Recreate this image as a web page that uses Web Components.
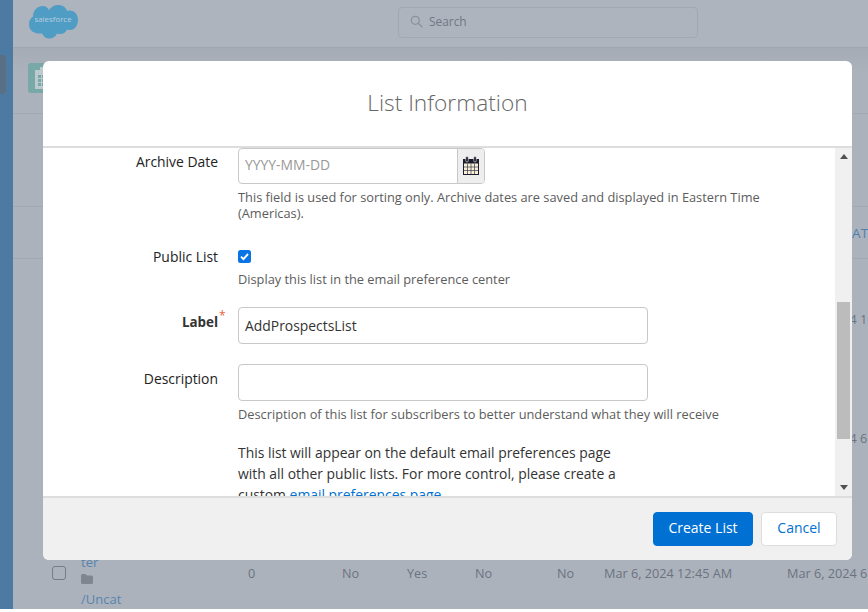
<!DOCTYPE html>
<html><head><meta charset="utf-8"><title>List Information</title>
<style>
html,body{margin:0;padding:0;background:#fff;height:612px;overflow:hidden}
body{font-family:"Open Sans","Noto Sans",sans-serif;font-size:13px;color:#333}
</style></head>
<body>
<sf-app>
  <sf-sidebar slot="side"></sf-sidebar>
  <sf-topbar slot="main"></sf-topbar>
  <sf-pagehead slot="main"></sf-pagehead>
  <sf-table slot="main">
    <sf-row kind="head" last="CREATED AT"></sf-row>
    <sf-row kind="plain" last="Mar 6, 2024 1:15 AM"></sf-row>
    <sf-row kind="plain" last="Mar 6, 2024 6:45 AM"></sf-row>
    <sf-row kind="full" last="Mar 6, 2024 6:45 AM"></sf-row>
  </sf-table>
</sf-app>
<sf-modal heading="List Information">
  <sf-field label="Archive Date" help="This field is used for sorting only. Archive dates are saved and displayed in Eastern Time (Americas)." style="height:102px"><sf-date></sf-date></sf-field>
  <sf-field label="Public List" help="Display this list in the email preference center" check style="height:57px"><input-check></input-check></sf-field>
  <sf-field label="Label" required style="height:57px"><sf-input value="AddProspectsList"></sf-input></sf-field>
  <sf-field label="Description" help="Description of this list for subscribers to better understand what they will receive" style="height:88px"><sf-input></sf-input></sf-field>
  <sf-note>This list will appear on the default email preferences page with all other public lists. For more control, please create a custom <a>email preferences page</a>.</sf-note>
  <sf-button slot="foot" kind="brand">Create List</sf-button>
  <sf-button slot="foot">Cancel</sf-button>
</sf-modal>
<script>
function def(name,css,html){
  customElements.define(name,class extends HTMLElement{
    connectedCallback(){
      if(this.shadowRoot)return;
      const r=this.attachShadow({mode:'open'});
      r.innerHTML='<style>'+css+'</style>'+(typeof html==='function'?html(this):html);
    }
  });
}
def('sf-app',`:host{display:flex;height:609px;background:#abb2bc;overflow:hidden}
.m{flex:1;min-width:0;display:flex;flex-direction:column}`,
`<slot name="side"></slot><div class="m"><slot name="main"></slot></div>`);
def('sf-sidebar',`:host{display:block;width:13px;flex:none;background:#4d7aa3;padding-top:55px;box-sizing:border-box}
div{width:6px;height:39px;background:#586f85;border-radius:0 4px 4px 0}`,`<div></div>`);
def('sf-topbar',`:host{display:flex;flex:none;align-items:center;height:48px;box-sizing:border-box;border-bottom:1px solid #9fa6b0;background:#adb4be;padding:0 0 0 15px}
.logo{width:50px;height:36px;position:relative;flex:none;margin-top:-5px}
svg.c{display:block;width:50px;height:36px}
.t{position:absolute;left:3px;top:11px;width:44px;text-align:center;font:400 7.9px "Open Sans",sans-serif;color:#b9d0de}
.s{margin-left:320px;width:300px;height:31px;box-sizing:border-box;border:1px solid #a0a8b2;border-radius:4px;display:flex;align-items:center;padding:0 0 2px 11px;gap:6px;color:#6f7884;font-size:11.9px;margin-top:-3px}
.s svg{width:13px;height:13px;flex:none}`,
`<div class="logo"><svg class="c" viewBox="0 0 50 36"><path fill="#4f9cc5" d="M21 7c2-3 5-5 9-5 4 0 8 2 9 6 1-.5 3-1 4-.2C47 8 50 12 50 17c0 5-3 10-8 10-1 0-2 0-3-.5-1 3-4 4.500-7 4.500-1 0-2 0-3-.5-1.500 3.500-4.500 5-7.500 5-3.500 0-6-2-7.500-5H12C6 30.500 1 28 1 21c0-3 1.500-6 4-7.500C5 7 10 3 15 3c2.500 0 4.500 1.500 6 4z"/></svg><span class="t">salesforce</span></div>
<div class="s"><svg viewBox="0 0 13 13" fill="none" stroke="#8a929d" stroke-width="1.300"><circle cx="5.300" cy="5.300" r="4"/><path d="M8.300 8.300l4 4"/></svg><span>Search</span></div>`);
def('sf-pagehead',`:host{display:block;flex:none;height:66px;box-sizing:border-box;border-bottom:1px solid #a2a9b3;background:linear-gradient(#a5acb6,#abb2bc 40%);padding:15px 0 0 15px}
div{width:30px;height:30px;background:#78a8a7;border-radius:3px;display:flex;justify-content:center;align-items:center}
svg{width:18px;height:22px}`,
`<div><svg viewBox="0 0 18 22"><path fill="#bccacd" d="M6 0h6v3H6zM1 3h16v19H1z"/><path fill="#78a8a7" d="M4 8h3v3H4zM8 8h3v3H8zM12 8h3v3h-3zM4 12h3v3H4zM8 12h3v3H8zM12 12h3v3h-3zM4 16h3v3H4zM8 16h3v3H8zM12 16h3v3h-3z"/></svg></div>`);
def('sf-table',`:host{display:block;flex:none;padding-top:92px}`,`<slot></slot>`);
def('sf-row',`:host{display:grid;grid-template-columns:39px 29px 167px 94px 65px 68px 82px 47px 183px 100px;align-items:center;color:#6b7380;font-size:12.7px;white-space:nowrap}
:host([kind=head]){height:53px;box-sizing:border-box;border-top:1px solid #a2a9b3;border-bottom:1px solid #a2a9b3;color:#4f7fae;font-size:13.5px}
:host([kind=plain]){height:119px}
:host([kind=full]){height:152px}
.l{grid-column:10}
:host([kind=head]) .l{padding-left:4px}
.box{width:14px;height:14px;box-sizing:border-box;border:1px solid #757c87;border-radius:3px;grid-column:2}
.n{grid-column:3;display:flex;flex-direction:column;color:#5a84ad;margin-top:14px;font-size:13px}
.n span{height:20px;line-height:20px}.n svg{display:block;width:12px;height:10px;margin:2px 0 5px}`,
el=>{const k=el.getAttribute('kind'),l=el.getAttribute('last');
 if(k==='full')return `<div class="box"></div><div class="n"><span>ter</span><svg viewBox="0 0 12 10"><path fill="#80868f" d="M0 1.500Q0 0 1.500 0h3l1.500 1.500h4.500Q12 1.500 12 3v5.500Q12 10 10.500 10h-9Q0 10 0 8.500z"/></svg><span>/Uncat</span></div><div>0</div><div>No</div><div>Yes</div><div>No</div><div>No</div><div>Mar 6, 2024 12:45 AM</div><div>${l}</div>`;
 return `<div class="l">${l}</div>`;});
def('sf-modal',`:host{position:absolute;left:43px;top:61px;width:809px;height:499px;display:flex;flex-direction:column;background:#fff;border-radius:6px;overflow:hidden}
header{flex:none;border-bottom:2px solid #ddd;display:flex;align-items:center;justify-content:center;font:300 22.7px "Open Sans",sans-serif;color:#666;padding-bottom:2px;height:83px}
.b{flex:1;display:flex;min-height:0}
.c{flex:1;min-width:0;overflow:hidden}
footer{height:64px;box-sizing:border-box;flex:none;border-top:2px solid #ddd;background:#f0f0f0;display:flex;justify-content:flex-end;align-items:center;gap:8px;padding:0 15px 0 0}`,
el=>`<header>${el.getAttribute('heading')}</header><div class="b"><div class="c"><slot></slot></div><sf-scroll></sf-scroll></div><footer><slot name="foot"></slot></footer>`);
def('sf-scroll',`:host{display:flex;flex-direction:column;align-items:center;width:17px;flex:none;background:#f0f0f0;box-sizing:border-box;padding-top:6px}
i{display:block;width:0;height:0;border-left:4px solid transparent;border-right:4px solid transparent}
.u{border-bottom:5px solid #505050}.d{border-top:5px solid #505050;margin-top:46px}
.t{width:13px;height:137px;background:#bcbcbc;margin-top:143px}`,
`<i class="u"></i><div class="t"></div><i class="d"></i>`);
def('sf-field',`:host{display:grid;grid-template-columns:175px 1fr;column-gap:20px;align-content:start;box-sizing:border-box;color:#333}
.l{text-align:right;font-size:13.9px;line-height:18px;padding-top:5px;position:relative;color:#222}
:host([required]) .l{font-weight:700;font-size:13.4px;color:#333;padding-top:6px}
:host([label=Description]) .l{padding-top:6px}
:host([check]) .l{padding-top:0;margin-top:-2px}
.r{position:absolute;left:176px;top:0;color:#e8643c;font-weight:400;font-size:12px}
.h{grid-column:2;color:#5c5c5c;font-size:12.8px;line-height:16px;margin-top:5px;width:530px}
:host([check]) .h{margin-top:2px}`,
el=>`<div class="l">${el.getAttribute('label')}${el.hasAttribute('required')?'<span class="r">*</span>':''}</div><div><slot></slot></div>${el.getAttribute('help')?`<div class="h">${el.getAttribute('help')}</div>`:''}`);
def('sf-input',`:host{display:block;width:410px;height:37px;box-sizing:border-box;border:1px solid #c8c8c8;border-radius:4px;background:#fff;padding:0 6px;line-height:35px;font-size:13.9px;color:#333}`,
el=>el.getAttribute('value')||'');
def('sf-date',`:host{display:flex;width:247px;height:36px;box-sizing:border-box;border:1px solid #c8c8c8;border-radius:4px;overflow:hidden}
.p{flex:1;padding-left:6px;line-height:32px;color:#999;font-size:13.9px}
.a{width:26px;flex:none;background:#eee;border-left:1px solid #c8c8c8;display:flex;align-items:center;justify-content:center}
svg{width:18px;height:20px;margin-top:-1px}`,
`<div class="p">YYYY-MM-DD</div><div class="a"><svg viewBox="0 0 18 20"><path fill="#1c1c2c" d="M1 3h16v16H1z"/><path fill="#f8efd8" d="M2 7.500h14V18H2z"/><path stroke="#3a3a4a" stroke-width=".7" fill="none" d="M2 11h14M2 14.500h14M5.500 7.500V18M9 7.500V18M12.500 7.500V18"/><rect x="3.700" y=".5" width="2.600" height="5.500" rx="1.300" fill="#1c1c2c" stroke="#eee" stroke-width=".6"/><rect x="11.700" y=".5" width="2.600" height="5.500" rx="1.300" fill="#1c1c2c" stroke="#eee" stroke-width=".6"/></svg></div>`);
def('input-check',`:host{display:block;height:19px}
div{width:13px;height:13px;background:#0b74e5;border-radius:2.500px;display:flex;align-items:center;justify-content:center}
svg{width:11px;height:11px}`,
`<div><svg viewBox="0 0 11 11"><path d="M2 5.700l2.400 2.400L9 3" fill="none" stroke="#fff" stroke-width="1.900"/></svg></div>`);
def('sf-note',`:host{display:block;margin:-10px 0 0 195px;width:385px;font-size:13.9px;line-height:21px;color:#333}
::slotted(a){color:#0070d2;text-decoration:none}`,`<slot></slot>`);
def('sf-button',`:host{display:flex;align-items:center;justify-content:center;height:34px;box-sizing:border-box;border:1px solid #ddd;border-radius:4px;background:#fff;color:#0070d2;font-size:14px;width:76px;padding-bottom:3px}
:host([kind=brand]){background:#0070d2;border-color:#0070d2;color:#fff;width:100px}`,`<slot></slot>`);
</script>
</body></html>
